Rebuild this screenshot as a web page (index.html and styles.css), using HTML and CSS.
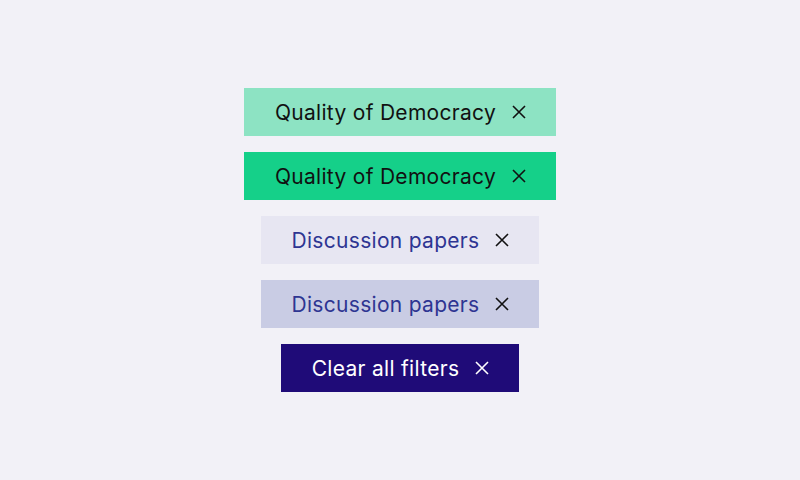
FILE: index.html
```html
<!DOCTYPE html>
<html lang="en">

<head>
  <meta charset="UTF-8" />
  <title>Filter tags</title>
  <link rel="stylesheet" href="styles.css">
</head>

<body>
  <div class="tag-list">
    <!-- 主题标签 -->
    <button class="tag tag-topic">
      <span class="tag-label">Quality of Democracy</span>
      <svg class="tag-close" viewBox="0 0 14 14"><path d="M1 1L13 13M13 1L1 13" /></svg>
    </button>
    <button class="tag tag-topic active">
      <span class="tag-label">Quality of Democracy</span>
      <svg class="tag-close" viewBox="0 0 14 14"><path d="M1 1L13 13M13 1L1 13" /></svg>
    </button>

    <!-- 类型标签 -->
    <button class="tag tag-type">
      <span class="tag-label">Discussion papers</span>
      <svg class="tag-close" viewBox="0 0 14 14"><path d="M1 1L13 13M13 1L1 13" /></svg>
    </button>
    <button class="tag tag-type active">
      <span class="tag-label">Discussion papers</span>
      <svg class="tag-close" viewBox="0 0 14 14"><path d="M1 1L13 13M13 1L1 13" /></svg>
    </button>

    <!-- 清除全部 -->
    <button class="tag tag-clear">
      <span class="tag-label">Clear all filters</span>
      <svg class="tag-close" viewBox="0 0 14 14"><path d="M1 1L13 13M13 1L1 13" /></svg>
    </button>
  </div>
</body>

</html>
```

FILE: styles.css
```css
body {
  margin: 0;
  background-color: #f2f1f7;
  font-family: Inter, "Liberation Sans", sans-serif;
  height: 100vh;
  display: flex;
  align-items: center;
  justify-content: center;
}

.tag-list {
  display: flex;
  flex-direction: column;
  align-items: center;
  gap: 16px;
}

.tag {
  display: flex;
  align-items: center;
  gap: 16px;
  height: 48px;
  padding: 0 30px 0 31px;
  border: none;
  border-radius: 0;
  font-family: inherit;
  font-size: 21px;
  letter-spacing: 0.3px;
  color: #111111;
  cursor: pointer;
}

.tag-close {
  width: 14px;
  height: 14px;
  fill: none;
  stroke: currentColor;
  stroke-width: 1.6;
}

/* 主题标签 */
.tag-topic {
  background-color: #8de3c3;
}

.tag-topic.active {
  background-color: #15d089;
}

/* 类型标签 */
.tag-type {
  background-color: #e7e6f2;
}

.tag-type.active {
  background-color: #c9cce4;
}

.tag-type .tag-label {
  color: #2e3592;
}

.tag-type .tag-close {
  stroke: #111111;
}

/* 清除全部 */
.tag-clear {
  background-color: #1f0b78;
  color: #ffffff;
}
```
